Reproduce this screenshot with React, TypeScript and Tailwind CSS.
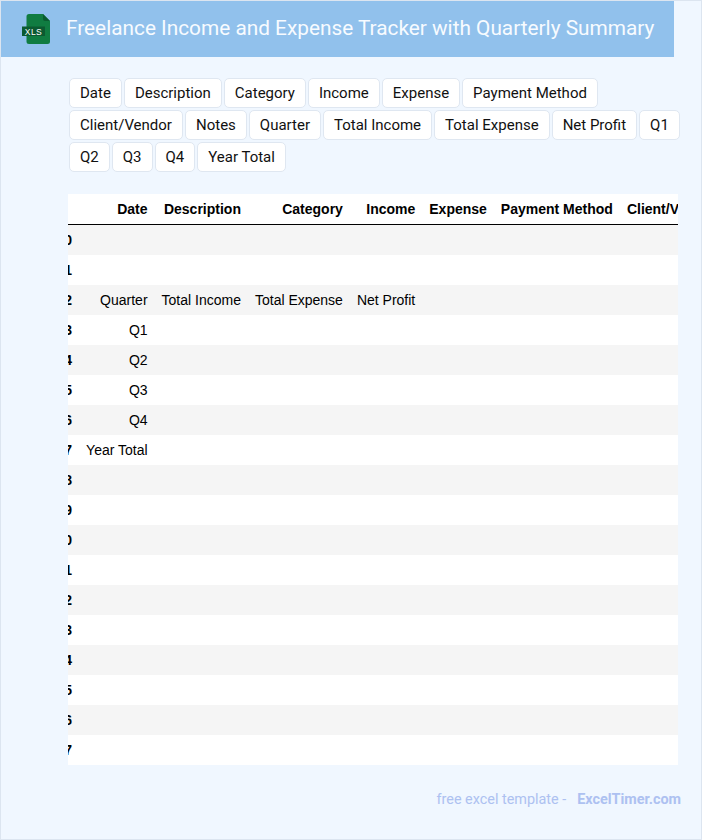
const chips = [
  'Date', 'Description', 'Category', 'Income', 'Expense', 'Payment Method', 'Client/Vendor', 'Notes', 'Quarter',
  'Total Income', 'Total Expense', 'Net Profit', 'Q1', 'Q2', 'Q3', 'Q4', 'Year Total',
];

const headers = ['Date', 'Description', 'Category', 'Income', 'Expense', 'Payment Method', 'Client/Vendor', 'Notes'];

// rows that have content, the rest stay empty
const filled: Record<number, string[]> = {
  2: ['Quarter', 'Total Income', 'Total Expense', 'Net Profit'],
  3: ['Q1'],
  4: ['Q2'],
  5: ['Q3'],
  6: ['Q4'],
  7: ['Year Total'],
};

const rowIds = Array.from({ length: 18 }, (_, i) => i);

function XlsIcon() {
  return (
    <svg width="30" height="32" viewBox="0 0 30 32" className="shrink-0">
      <path d="M8 1h14l7 7v20.5a2.5 2.5 0 0 1-2.5 2.5h-18.5a2.5 2.5 0 0 1-2.5-2.5v-25a2.5 2.5 0 0 1 2.5-2.5z" fill="#107c41" />
      <path d="M22 1l7 7h-5a2 2 0 0 1-2-2z" fill="#0a5c30" />
      <rect x="1" y="13.5" width="23" height="9.5" fill="#0b5a31" />
      <text x="12.5" y="21.5" textAnchor="middle" fill="#ffffff" fontSize="8.5" letterSpacing="0.4" fontFamily="'Liberation Sans', sans-serif">XLS</text>
    </svg>
  );
}

export default function App() {
  return (
    <div className="h-[840px] w-[702px] overflow-hidden border border-[#dce5f0] bg-[#f0f7ff] font-['Roboto',sans-serif]">
      <header className="flex h-14 w-[673px] items-center bg-[#91c1ec] pl-5">
        <XlsIcon />
        <h1 className="ml-[15px] whitespace-nowrap text-[20.8px] font-normal text-[#f7fbff]">
          Freelance Income and Expense Tracker with Quarterly Summary
        </h1>
      </header>

      <div className="ml-[68px] mt-[21px] flex w-[620px] flex-wrap gap-x-[2px] gap-y-[2px]">
        {chips.map((chip) => (
          <span
            key={chip}
            className="h-[30px] rounded-[5px] border border-[#dfe7f1] bg-white px-[10px] text-[15px] leading-[28px] text-[#111111]"
          >
            {chip}
          </span>
        ))}
      </div>

      <div className="ml-[67px] mt-[22px] w-[610px] overflow-hidden bg-white font-['Liberation_Sans',sans-serif] text-sm text-black">
        <table className="ml-[-18.5px] border-separate border-spacing-0 whitespace-nowrap">
          <thead>
            <tr className="h-[31px]">
              <th className="border-b border-black px-[7px]" />
              {headers.map((h) => (
                <th key={h} className="border-b border-black px-[7px] text-right font-bold">
                  {h}
                </th>
              ))}
            </tr>
          </thead>
          <tbody>
            {rowIds.map((id) => (
              <tr key={id} className={id % 2 === 0 ? 'h-[30px] bg-[#f5f5f5]' : 'h-[30px] bg-white'}>
                <th className="px-[7px] text-right font-bold">{id + 10}</th>
                {headers.map((h, i) => (
                  <td key={h} className="px-[7px] text-right font-normal">
                    {filled[id]?.[i] ?? ''}
                  </td>
                ))}
              </tr>
            ))}
          </tbody>
        </table>
      </div>

      <footer className="mt-6 w-[680px] text-right text-[14.4px] text-[#adc1f1]">
        free excel template -<span className="ml-[11px] font-bold">ExcelTimer.com</span>
      </footer>
    </div>
  );
}
